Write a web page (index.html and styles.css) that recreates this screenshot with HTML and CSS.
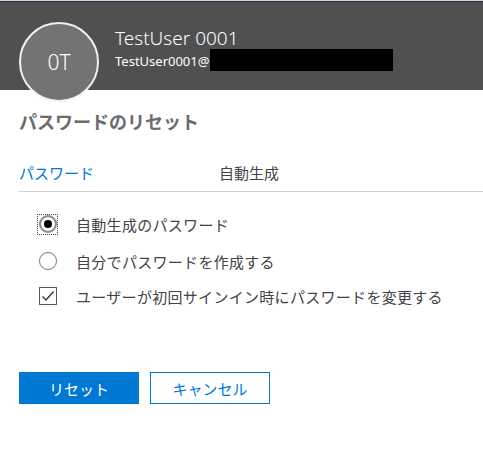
FILE: index.html
```html
<!DOCTYPE html>
<html lang="ja">
<head>
<meta charset="utf-8">
<link rel="stylesheet" href="styles.css">
</head>
<body>
<div class="topline"></div>
<header class="header">
  <div class="avatar">0T</div>
  <div class="who">
    <div class="name">TestUser 0001</div>
    <div class="mail">TestUser0001@<span class="redact"></span></div>
  </div>
</header>
<main class="content">
  <h1 class="title">パスワードのリセット</h1>
  <div class="field">
    <span class="label">パスワード</span>
    <span class="value">自動生成</span>
  </div>
  <div class="options">
    <label class="opt"><span class="focus"><span class="radio on"></span></span><span>自動生成のパスワード</span></label>
    <label class="opt"><span class="focus plain"><span class="radio"></span></span><span>自分でパスワードを作成する</span></label>
    <label class="opt"><span class="focus plain"><span class="check"><svg width="14" height="12" viewBox="0 0 14 12"><path d="M1.5 6.5 L5 10 L12.5 1.5" fill="none" stroke="#333" stroke-width="1.3"/></svg></span></span><span>ユーザーが初回サインイン時にパスワードを変更する</span></label>
  </div>
  <div class="buttons">
    <button class="btn primary">リセット</button>
    <button class="btn secondary">キャンセル</button>
  </div>
</main>
</body>
</html>
```
FILE: styles.css
```css
html, body { margin: 0; padding: 0; background: #fff; }
body { font-family: "Noto Sans", "Noto Sans CJK JP", sans-serif; color: #333; width: 483px; height: 468px; overflow: hidden; }
.topline { height: 1px; background: #cdd6e6; border-bottom: 1px solid #2a2f3a; }
.header { height: 88px; background: #505050; position: relative; display: flex; }
.avatar { position: absolute; left: 19px; top: 20px; width: 76px; height: 76px; border-radius: 50%; background: #737373; border: 2px solid #f2f2f2; color: #fff; font-size: 21px; font-weight: 300; display: flex; align-items: center; justify-content: center; line-height: 1; }
.who { margin-left: 115px; padding-top: 23px; color: #fff; }
.name { font-size: 19px; font-weight: 300; line-height: 26px; }
.mail { font-size: 13px; line-height: 20px; display: flex; align-items: center; }
.redact { display: inline-block; width: 183px; height: 22px; background: #000; margin-left: 1px; margin-top: -2px; }
.content { padding: 16px 0 0 19px; }
.title { margin: 0; font-size: 18px; font-weight: 700; color: #6b6b6b; font-family: "Noto Sans CJK JP", sans-serif; line-height: 30px; }
.field { display: flex; margin-top: 20px; height: 33px; align-items: center; border-bottom: 1px solid #d0d0d0; font-family: "Noto Sans CJK JP", sans-serif; font-size: 15px; padding-bottom: 2px; }
.label { color: #0078d4; width: 200px; }
.value { color: #444; }
.options { padding: 21px 0 0 18px; display: flex; flex-direction: column; gap: 15px; font-family: "Noto Sans CJK JP", sans-serif; font-size: 15px; color: #444; }
.opt { display: flex; align-items: center; gap: 18px; height: 22px; }
.opt:nth-child(3) { margin-top: -2px; }
.opt span:last-child { letter-spacing: 0.3px; }
.focus { width: 21px; height: 21px; box-sizing: border-box; border: 1px dotted #444; display: flex; align-items: center; justify-content: center; }
.focus.plain { border-color: transparent; }
.radio { width: 18px; height: 18px; box-sizing: border-box; border-radius: 50%; border: 1px solid #777; position: relative; }
.radio.on { border: 2px solid #888; }
.radio.on::after { content: ""; position: absolute; left: 3px; top: 3px; width: 8px; height: 8px; border-radius: 50%; background: #000; }
.check { width: 18px; height: 18px; box-sizing: border-box; border: 1px solid #555; display: flex; align-items: center; justify-content: center; }
.buttons { display: flex; gap: 11px; margin-top: 65px; }
.btn { width: 120px; height: 32px; font-family: "Noto Sans CJK JP", sans-serif; font-size: 15px; padding: 0; cursor: pointer; }
.primary { background: #0078d4; color: #fff; border: none; }
.secondary { background: #fff; color: #0078d4; border: 1px solid #0078d4; }
```
